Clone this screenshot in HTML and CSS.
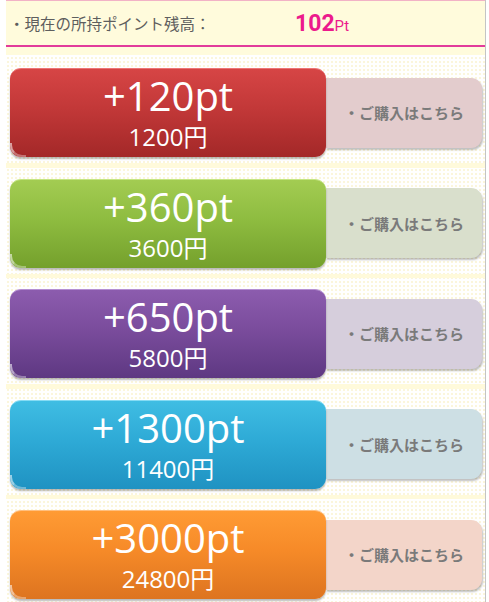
FILE: index.html
```html
<!DOCTYPE html>
<html lang="ja">
<head>
<meta charset="utf-8">
<title>ポイント購入</title>
<link rel="stylesheet" href="styles.css">
</head>
<body>
<div class="page">
  <div class="header">
    <span class="label">・現在の所持ポイント残高：</span>
    <span class="balance"><span class="num">102</span><span class="unit">Pt</span></span>
  </div>
  <div class="header-strip"></div>
  <div class="list">
    <div class="row">
      <a class="pack red"><span class="pt">+120pt</span><span class="yen">1200円</span></a>
      <a class="buy buy-red">・ご購入はこちら</a>
    </div>
    <div class="band"></div>
    <div class="row">
      <a class="pack green"><span class="pt">+360pt</span><span class="yen">3600円</span></a>
      <a class="buy buy-green">・ご購入はこちら</a>
    </div>
    <div class="band"></div>
    <div class="row">
      <a class="pack purple"><span class="pt">+650pt</span><span class="yen">5800円</span></a>
      <a class="buy buy-purple">・ご購入はこちら</a>
    </div>
    <div class="band"></div>
    <div class="row">
      <a class="pack blue"><span class="pt">+1300pt</span><span class="yen">11400円</span></a>
      <a class="buy buy-blue">・ご購入はこちら</a>
    </div>
    <div class="band"></div>
    <div class="row">
      <a class="pack orange"><span class="pt">+3000pt</span><span class="yen">24800円</span></a>
      <a class="buy buy-orange">・ご購入はこちら</a>
    </div>
  </div>
</div>
</body>
</html>
```

FILE: styles.css
```css
html, body {
  margin: 0;
  padding: 0;
  background: #ffffff;
}
body {
  font-family: "Noto Sans CJK JP", "Noto Sans", sans-serif;
}
.page {
  margin-left: 6px;
  width: 479px;
  min-height: 602px;
  border-right: 1px solid #c4c4c4;
  background-color: #ffffff;
  background-image: radial-gradient(circle, #fbf6dc 1px, transparent 1.2px);
  background-size: 4px 4px;
}
.header {
  height: 44px;
  background: #fffbdc;
  border-top: 1px solid #f2b2c6;
  border-bottom: 2px solid #e23b9b;
  display: flex;
  align-items: center;
  padding-left: 3px;
}
.label {
  font-size: 15.5px;
  color: #5e5e5e;
  width: 286px;
}
.balance {
  color: #ec1a8c;
  font-family: Roboto, "Noto Sans", sans-serif;
}
.num {
  font-size: 23px;
  font-weight: 700;
}
.unit {
  font-size: 15px;
}
.header-strip {
  height: 8px;
  background: #fffbdc;
}
.list {
  padding-top: 13px;
}
.row {
  display: flex;
  align-items: center;
  padding: 0 3px 0 4px;
  height: 89px;
}
.band {
  height: 4.5px;
  margin: 6px 0 11px;
  background: #fffadb;
}
.pack {
  position: relative;
  width: 316px;
  height: 89px;
  box-sizing: border-box;
  border-radius: 11px;
  display: flex;
  flex-direction: column;
  align-items: center;
  color: #ffffff;
  box-shadow: 0 2px 2px rgba(0, 0, 0, 0.28);
  z-index: 1;
}
.pack::after {
  content: "";
  position: absolute;
  left: 0;
  bottom: 0;
  width: 16px;
  height: 14px;
  border-left: 2px solid rgba(255, 255, 255, 0.55);
  border-bottom: 2px solid rgba(255, 255, 255, 0.35);
  border-bottom-left-radius: 12px;
  box-sizing: border-box;
}
.pt {
  font-family: "Open Sans", sans-serif;
  font-size: 40px;
  line-height: 44px;
  margin-top: 5px;
}
.yen {
  font-family: "Open Sans", "Noto Sans CJK JP", sans-serif;
  font-size: 24px;
  line-height: 26px;
  margin-top: 6px;
}
.red {
  background: linear-gradient(#d64545, #c23838 45%, #a32828);
  border-top: 1px solid #ec7575;
}
.green {
  background: linear-gradient(#a3cc52, #8ebc40 45%, #74a02c);
  border-top: 1px solid #c5e585;
}
.purple {
  background: linear-gradient(#8c5cae, #7a4c9c 45%, #5e3882);
  border-top: 1px solid #b58fd2;
}
.blue {
  background: linear-gradient(#3fbde3, #2eaad6 45%, #1f92c2);
  border-top: 1px solid #86dcf4;
}
.orange {
  background: linear-gradient(#ff9b34, #f68a28 45%, #dd7420);
  border-top: 1px solid #ffc080;
}
.buy {
  width: 156px;
  height: 70px;
  box-sizing: border-box;
  border-radius: 0 11px 11px 0;
  display: flex;
  align-items: center;
  justify-content: center;
  padding-left: 0;
  font-size: 15px;
  font-weight: 700;
  color: #7a7a7a;
  box-shadow: 1px 2px 2px rgba(0, 0, 0, 0.25);
}
.buy-red { background: #e3cccd; }
.buy-green { background: #d9dfcc; }
.buy-purple { background: #d6cedc; }
.buy-blue { background: #cddfe4; }
.buy-orange { background: #f3d5c9; }
```
